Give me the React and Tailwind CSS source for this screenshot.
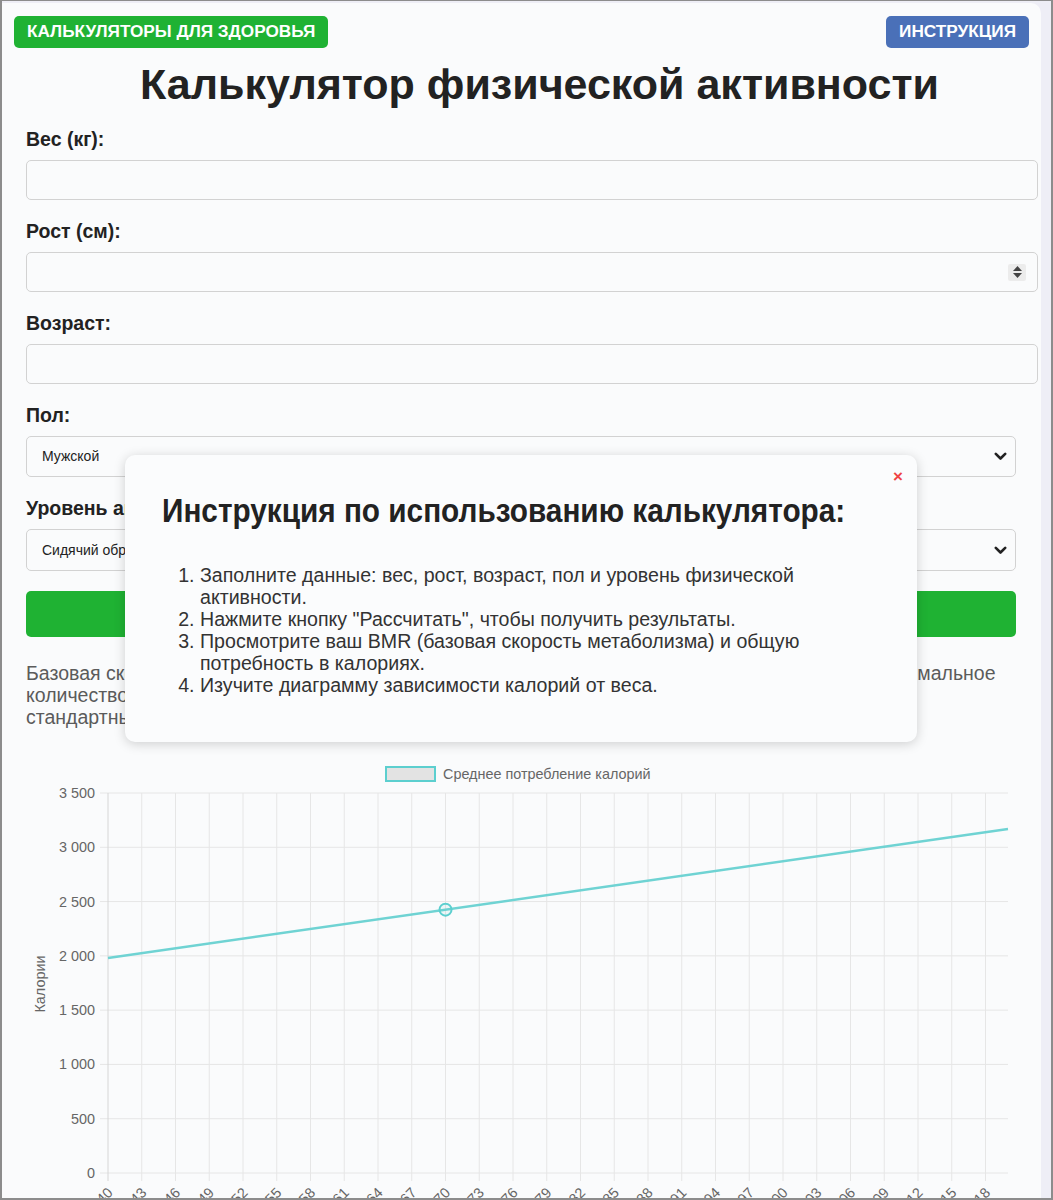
import React from "react";

const F = { fontFamily: '"Liberation Sans", Arial, sans-serif' };

function Chevron() {
  return (
    <svg width="13" height="9" viewBox="0 0 13 9" className="shrink-0">
      <path d="M1.8 1.8 L6.5 6.5 L11.2 1.8" fill="none" stroke="#222" strokeWidth="2.6" strokeLinecap="round" strokeLinejoin="round" />
    </svg>
  );
}

function Spinner() {
  return (
    <div className="w-[18px] h-[17px] bg-[#ececec] rounded-[2px] flex flex-col items-center justify-center gap-[2px]">
      <svg width="9" height="5" viewBox="0 0 9 5"><path d="M0 5 L4.5 0 L9 5 Z" fill="#444" /></svg>
      <svg width="9" height="5" viewBox="0 0 9 5"><path d="M0 0 L4.5 5 L9 0 Z" fill="#444" /></svg>
    </div>
  );
}

function Label({ children }) {
  return <div className="text-[19.5px] leading-[22px] font-bold text-[#222] mb-[10px]">{children}</div>;
}

function Chart() {
  const x0 = 108;
  const xs = (v) => x0 + (v - 40) * 11.25;
  const ys = (c) => 1172 - c * (380 / 3500);
  const ticksX = [];
  for (let v = 40; v <= 118; v += 3) ticksX.push(v);
  const ticksY = [0, 500, 1000, 1500, 2000, 2500, 3000, 3500];
  const fmt = (n) => (n >= 1000 ? `${Math.floor(n / 1000)} ${String(n % 1000).padStart(3, "0")}` : `${n}`);
  const cal = (w) => 1980 + (w - 40) * 14.85;
  return (
    <svg width="1012" height="450" viewBox="26 750 1012 450" className="block overflow-visible" style={F}>
      <rect x="386" y="766" width="49" height="14" fill="#e3e3e3" stroke="#5ccfcf" strokeWidth="2" />
      <text x="443" y="777.5" fontSize="14.4" fill="#666">Среднее потребление калорий</text>
      {ticksY.map((c) => (
        <g key={c}>
          <line x1="100" x2="1008" y1={ys(c)} y2={ys(c)} stroke="#e6e6e6" strokeWidth="1" />
          <text x="95" y={ys(c) + 5} fontSize="14.4" fill="#666" textAnchor="end">{fmt(c)}</text>
        </g>
      ))}
      {ticksX.map((v) => (
        <g key={v}>
          <line x1={xs(v)} x2={xs(v)} y1="792" y2="1180" stroke={v === 40 ? "#d6d6d6" : "#e6e6e6"} strokeWidth="1" />
          <text
            x={xs(v) + 3}
            y="1190"
            fontSize="14.4"
            fill="#666"
            textAnchor="end"
            dominantBaseline="middle"
            transform={`rotate(-45 ${xs(v) + 3} 1190)`}
          >
            {v}
          </text>
        </g>
      ))}
      <text x="45" y="983" fontSize="14.4" fill="#666" textAnchor="middle" transform="rotate(-90 45 983)">Калории</text>
      <line x1={xs(40)} y1={ys(cal(40))} x2={xs(120)} y2={ys(cal(120))} stroke="#6fd3d3" strokeWidth="2.5" />
      <circle cx={xs(70)} cy={ys(cal(70))} r="6" fill="rgba(75,192,192,0.08)" stroke="#5ccfcf" strokeWidth="2" />
    </svg>
  );
}

export default function App() {
  return (
    <div className="w-[1053px] h-[1200px] overflow-hidden bg-[#eeeef6] border-l-2 border-r-2 border-t border-b-2 border-[#8c8c8c]" style={F}>
      <div className="relative mt-[2px] mr-[10px] h-full bg-[#fafbfc] rounded-tr-[10px] px-3 pt-[13px]">
        <div className="flex justify-between">
          <div className="h-[32px] px-[13px] flex items-center bg-[#1fb233] rounded-[5px] text-white font-bold text-[17.2px] uppercase">
            Калькуляторы для здоровья
          </div>
          <div className="h-[32px] px-[13px] flex items-center bg-[#4a70b8] rounded-[5px] text-white font-bold text-[17.2px] uppercase">
            Инструкция
          </div>
        </div>

        <div className="pl-3">
          <h1 className="w-[1027px] text-center text-[43px] leading-[48px] font-bold text-[#222] mt-[12px] whitespace-nowrap">
            Калькулятор физической активности
          </h1>

          <div className="mt-[20px] flex flex-col">
            <Label>Вес (кг):</Label>
            <div className="w-[1012px] h-[40px] border border-[#d2d2d2] rounded-[5px] bg-[#fafbfc] mb-[20px]" />

            <Label>Рост (см):</Label>
            <div className="w-[1012px] h-[40px] border border-[#d2d2d2] rounded-[5px] bg-[#fafbfc] mb-[20px] flex items-center justify-end pr-[11px]">
              <Spinner />
            </div>

            <Label>Возраст:</Label>
            <div className="w-[1012px] h-[40px] border border-[#d2d2d2] rounded-[5px] bg-[#fafbfc] mb-[20px]" />

            <Label>Пол:</Label>
            <div className="w-[990px] h-[41px] border border-[#d2d2d2] rounded-[5px] bg-[#fafbfc] mb-[20px] flex items-center justify-between pl-[15px] pr-[8px] text-[14px] text-[#222]">
              <span>Мужской</span>
              <Chevron />
            </div>

            <Label>Уровень активности:</Label>
            <div className="w-[990px] h-[42px] border border-[#d2d2d2] rounded-[5px] bg-[#fafbfc] flex items-center justify-between pl-[15px] pr-[8px] text-[14px] text-[#222]">
              <span>Сидячий образ жизни</span>
              <Chevron />
            </div>

            <div className="w-[990px] h-[46px] mt-[20px] rounded-[5px] bg-[#1fb233] flex items-center justify-center text-white text-[18px] font-bold">
              Рассчитать
            </div>

            <div className="mt-[25px] w-[990px] text-[19.5px] leading-[22px] text-[#5b5b5b]">
              <div className="whitespace-nowrap">Базовая скорость метаболизма (BMR) – это количество калорий, нужное организму в покое, минимальное</div>
              <div className="whitespace-nowrap">количество энергии для поддержания жизненных функций. Рассчитывается по</div>
              <div className="whitespace-nowrap">стандартным формулам.</div>
            </div>

            <div className="mt-[23px]">
              <Chart />
            </div>
          </div>
        </div>

        <div className="absolute left-[123px] top-[452px] w-[792px] h-[287px] bg-[#fbfcfd] rounded-[10px] shadow-[0_2px_12px_rgba(0,0,0,0.18)] pl-[37px] pr-[37px] pt-[35px]">
          <div className="absolute right-[14px] top-[13px] text-[#ef4444] text-[17px] font-bold leading-none">×</div>
          <h2 className="text-[34px] leading-[40px] font-bold text-[#222] whitespace-nowrap inline-block origin-left scale-x-[0.875]">
            Инструкция по использованию калькулятора:
          </h2>
          <ol className="mt-[34px] list-decimal pl-[38px] text-[19.6px] leading-[22px] text-[#333]">
            <li>Заполните данные: вес, рост, возраст, пол и уровень физической активности.</li>
            <li>Нажмите кнопку "Рассчитать", чтобы получить результаты.</li>
            <li>Просмотрите ваш BMR (базовая скорость метаболизма) и общую потребность в калориях.</li>
            <li>Изучите диаграмму зависимости калорий от веса.</li>
          </ol>
        </div>
      </div>
    </div>
  );
}
